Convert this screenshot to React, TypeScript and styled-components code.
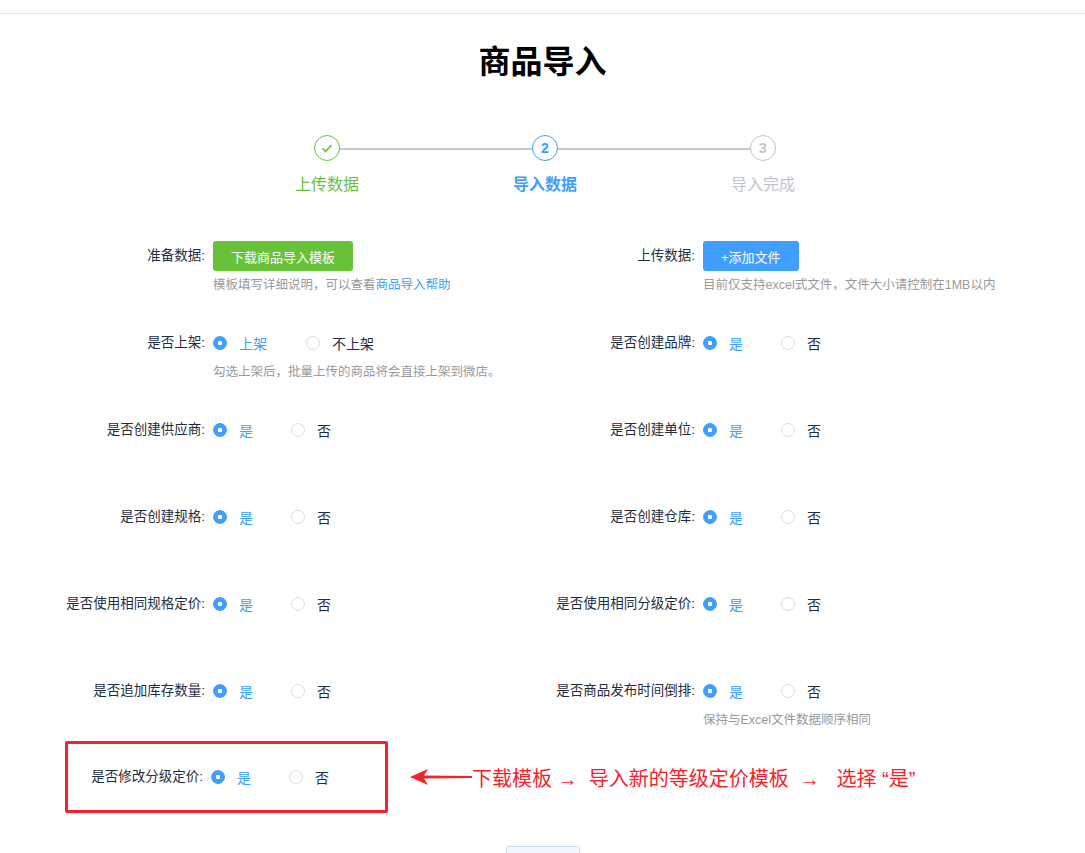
import * as React from 'react';
import styled, { createGlobalStyle } from 'styled-components';

const Global = createGlobalStyle`
  body { margin: 0; background: #fff; font-family: "Liberation Sans", "Noto Sans CJK SC", sans-serif; color: #1f2d3d; }
`;

const Page = styled.div`
  border-top: 1px solid #e6e6e6;
  margin-top: 13px;
  height: 839px;
  overflow: hidden;
`;

const Title = styled.h1`
  margin: 28px 0 0;
  text-align: center;
  font-size: 32px;
  font-weight: bold;
  color: #000;
  line-height: 40px;
`;

const Steps = styled.div`
  display: grid;
  grid-template-columns: 218px 218px 218px;
  margin: 53px 0 0 218px;
`;

const Step = styled.div<{ $last?: boolean }>`
  display: flex;
  flex-direction: column;
  align-items: flex-start;
  position: relative;
  &::after {
    content: '';
    display: ${p => (p.$last ? 'none' : 'block')};
    position: absolute;
    left: 122px;
    right: -96px;
    top: 13px;
    height: 2px;
    background: #bfcbd9;
  }
`;

const Circle = styled.div<{ $c: string }>`
  width: 24px;
  height: 24px;
  margin-left: 96px;
  border: 1px solid ${p => p.$c};
  border-radius: 50%;
  color: ${p => p.$c};
  display: flex;
  align-items: center;
  justify-content: center;
  font-size: 14px;
  font-weight: bold;
  background: #fff;
`;

const StepLabel = styled.div<{ $c: string; $bold?: boolean }>`
  width: 218px;
  text-align: center;
  margin-top: 10px;
  font-size: 16px;
  color: ${p => p.$c};
  font-weight: ${p => (p.$bold ? 'bold' : 'normal')};
`;

const Form = styled.div`
  margin-top: 46px;
`;

const Row = styled.div<{ $h: number }>`
  display: grid;
  grid-template-columns: 490px 1fr;
  height: ${p => p.$h}px;
`;

const Field = styled.div<{ $lw?: number }>`
  display: grid;
  grid-template-columns: ${p => p.$lw ?? 205}px 1fr;
  column-gap: 8px;
  align-content: start;
`;

const Label = styled.div`
  text-align: right;
  font-size: 13.5px;
  color: #1f2d3d;
  line-height: 30px;
  white-space: nowrap;
`;

const Content = styled.div`
  display: flex;
  flex-direction: column;
`;

const Controls = styled.div`
  display: flex;
  align-items: center;
  height: 30px;
`;

const Btn = styled.button<{ $bg: string }>`
  border: none;
  border-radius: 3px;
  background: ${p => p.$bg};
  color: #fff;
  font-family: inherit;
  font-size: 13px;
  height: 30px;
  padding: 0 18px;
`;

const Hint = styled.div`
  font-size: 12.5px;
  color: #999;
  margin-top: 3px;
  white-space: nowrap;
  & a { color: #409eff; text-decoration: none; }
`;

const Radio = styled.label<{ $on?: boolean }>`
  display: flex;
  align-items: center;
  width: 78px;
  font-size: 14px;
  color: ${p => (p.$on ? '#409eff' : '#1f2d3d')};
  &::before {
    content: '';
    box-sizing: border-box;
    width: 14px;
    height: 14px;
    border-radius: 50%;
    margin-right: 12px;
    border: 1px solid ${p => (p.$on ? '#409eff' : '#d8dce5')};
    background: ${p => (p.$on ? 'radial-gradient(circle, #fff 0 2px, #409eff 2.5px)' : '#fff')};
  }
`;

const LastRow = styled.div`
  display: flex;
  align-items: center;
  margin-left: 65px;
`;

const RedBox = styled.div`
  border: 3px solid #f5222d;
  border-radius: 2px;
  width: 317px;
  height: 66px;
  display: flex;
  align-items: center;
  box-sizing: content-box;
`;

const Note = styled.div`
  display: flex;
  align-items: center;
  margin-left: 22px;
  color: #f5222d;
  font-size: 20px;
  white-space: pre;
`;

const Next = styled.div`
  width: 72px;
  height: 20px;
  margin: 33px auto 0;
  border: 1px solid #c6ddf5;
  border-radius: 3px;
  background: #f2f8fe;
`;

const YesNo = ({ a = '是', b = '否', w }: { a?: string; b?: string; w?: number }) => (
  <Controls>
    <Radio $on style={w ? { width: w } : undefined}>{a}</Radio>
    <Radio>{b}</Radio>
  </Controls>
);

const Item = ({ label, hint, children }: { label: string; hint?: React.ReactNode; children?: React.ReactNode }) => (
  <Field>
    <Label>{label}:</Label>
    <Content>
      {children ?? <YesNo />}
      {hint && <Hint>{hint}</Hint>}
    </Content>
  </Field>
);

export default function App() {
  return (
    <Page>
      <Global />
      <Title>商品导入</Title>
      <Steps>
        <Step>
          <Circle $c="#67c23a">
            <svg width="14" height="14" viewBox="0 0 14 14"><path d="M2.5 7.5l3 3 6-6.5" fill="none" stroke="#67c23a" strokeWidth="1.6" /></svg>
          </Circle>
          <StepLabel $c="#67c23a">上传数据</StepLabel>
        </Step>
        <Step>
          <Circle $c="#409eff">2</Circle>
          <StepLabel $c="#409eff" $bold>导入数据</StepLabel>
        </Step>
        <Step $last>
          <Circle $c="#c0c4cc">3</Circle>
          <StepLabel $c="#c0c4cc">导入完成</StepLabel>
        </Step>
      </Steps>
      <Form>
        <Row $h={87}>
          <Item label="准备数据" hint={<>模板填写详细说明，可以查看<a>商品导入帮助</a></>}>
            <Controls><Btn $bg="#67c23a">下载商品导入模板</Btn></Controls>
          </Item>
          <Item label="上传数据" hint="目前仅支持excel式文件，文件大小请控制在1MB以内">
            <Controls><Btn $bg="#409eff">+添加文件</Btn></Controls>
          </Item>
        </Row>
        <Row $h={87}>
          <Item label="是否上架" hint="勾选上架后，批量上传的商品将会直接上架到微店。">
            <YesNo a="上架" b="不上架" w={93} />
          </Item>
          <Item label="是否创建品牌" />
        </Row>
        <Row $h={87}>
          <Item label="是否创建供应商" />
          <Item label="是否创建单位" />
        </Row>
        <Row $h={87}>
          <Item label="是否创建规格" />
          <Item label="是否创建仓库" />
        </Row>
        <Row $h={87}>
          <Item label="是否使用相同规格定价" />
          <Item label="是否使用相同分级定价" />
        </Row>
        <Row $h={65}>
          <Item label="是否追加库存数量" />
          <Item label="是否商品发布时间倒排" hint="保持与Excel文件数据顺序相同" />
        </Row>
        <LastRow>
          <RedBox>
            <Field $lw={135}>
              <Label>是否修改分级定价:</Label>
              <Content><YesNo /></Content>
            </Field>
          </RedBox>
          <Note>
            <svg width="62" height="16" viewBox="0 0 62 16"><path d="M0 8L18 0L14 6.5L62 7L62 9L14 9.5L18 16Z" fill="#f5222d" /></svg>
            <span>下载模板 →  导入新的等级定价模板  →   选择 “是”</span>
          </Note>
        </LastRow>
        <Next />
      </Form>
    </Page>
  );
}
